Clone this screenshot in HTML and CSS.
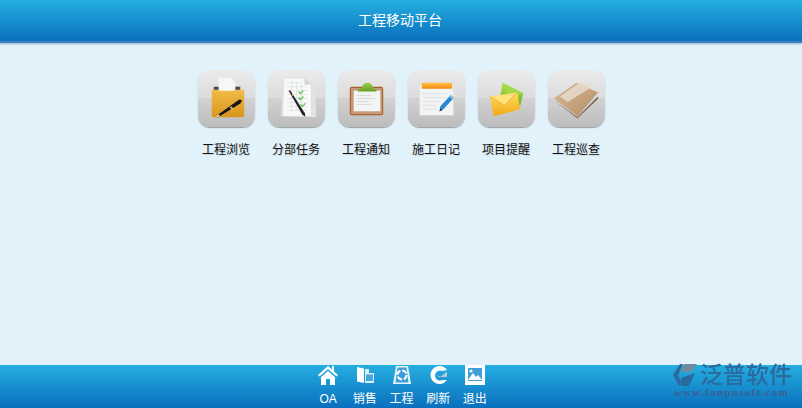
FILE: index.html
```html
<!DOCTYPE html>
<html lang="zh">
<head>
<meta charset="utf-8">
<title>工程移动平台</title>
<link rel="stylesheet" href="styles.css">
</head>
<body>
<div class="page">
  <header class="topbar">工程移动平台</header>
  <main class="content">
    <div class="grid">
      <a class="app">
        <span class="tile">
          <svg viewBox="0 0 58 58" class="tile-icon">
            <defs>
              <linearGradient id="folder" x1="0" y1="0" x2="0" y2="1"><stop offset="0" stop-color="#f3bb48"/><stop offset="1" stop-color="#d9951c"/></linearGradient>
              <linearGradient id="bar" x1="0" y1="0" x2="0" y2="1"><stop offset="0" stop-color="#ffc24a"/><stop offset="1" stop-color="#f58a12"/></linearGradient>
              <linearGradient id="mailback" x1="0" y1="0" x2="0" y2="1"><stop offset="0" stop-color="#b4e24e"/><stop offset="1" stop-color="#6fae22"/></linearGradient>
              <linearGradient id="mail" x1="0" y1="0" x2="0" y2="1"><stop offset="0" stop-color="#ffdf62"/><stop offset="1" stop-color="#f2a818"/></linearGradient>
              <linearGradient id="book" x1="0" y1="0" x2="1" y2="1"><stop offset="0" stop-color="#d8bb98"/><stop offset="1" stop-color="#b58d63"/></linearGradient>
              <linearGradient id="clip" x1="0" y1="0" x2="0" y2="1"><stop offset="0" stop-color="#9ccc52"/><stop offset="1" stop-color="#659e24"/></linearGradient>
            </defs>
            <path d="M16 17h27v10H16z" fill="#4c4c4c"/>
            <path d="M21 8h12l5 5v15H21z" fill="#f7f7f7"/>
            <path d="M14 20h6l2 1h14l2-1h9v26q0 2-2 2H16q-2 0-2-2z" fill="url(#folder)"/>
            <path d="M18 49l3-4 21-15 3 1-2 3-21 13z" fill="#15151a"/>
            <path d="M32 38l3 2.500 1.500-1-3-2.500z" fill="#d8c070"/>
            <path d="M18 49l2.500-4 2 1.500z" fill="#f4e8a0"/>
          </svg>
        </span>
        <span class="label">工程浏览</span>
      </a>
      <a class="app">
        <span class="tile">
          <svg viewBox="0 0 58 58" class="tile-icon">
            <path d="M16 12l32 4 1 32-36-1z" fill="#e2e4e2"/>
            <path d="M16 8h21l7 7v32H15z" fill="#f8f9f8" stroke="#cfd1cf" stroke-width=".5"/>
            <path d="M37 8v7h7z" fill="#d4d6d4"/>
            <path d="M19 13h15M19 17h21M19 21h21M19 25h21M19 29h21M19 33h21M19 37h21M19 41h21M24 12v30M29 12v30M34 14v28" stroke="#d4dfd4" stroke-width=".6" fill="none"/>
            <path d="M31 22l2 2 3-3M31 28l2 2 3-3M33 35l2 2 3-3" stroke="#5bc050" stroke-width="1.300" fill="none"/>
            <path d="M21 21l1.500-.5 15 23.500.5 3.500-3-2z" fill="#22222a"/>
            <path d="M24 25l1.600-.8 .8 1.500-1.600.8z" fill="#d9b850"/>
          </svg>
        </span>
        <span class="label">分部任务</span>
      </a>
      <a class="app">
        <span class="tile">
          <svg viewBox="0 0 58 58" class="tile-icon">
            <rect x="12" y="17" width="34" height="29" rx="2" fill="#a9622f"/>
            <rect x="13.200" y="18.200" width="31.600" height="26.600" rx="1" fill="#c99a78"/>
            <rect x="16" y="21" width="27" height="21" fill="#f3f5f5"/>
            <path d="M19 26h15M19 29h18M19 32h12M19 35h15" stroke="#d4d8d8" stroke-width="1" fill="none"/>
            <path d="M20 22q0-3 4-3 1-6 6-6t6 6q4 0 3 3z" fill="url(#clip)"/>
          </svg>
        </span>
        <span class="label">工程通知</span>
      </a>
      <a class="app">
        <span class="tile">
          <svg viewBox="0 0 58 58" class="tile-icon">
            <rect x="12" y="15" width="34" height="31" fill="#f1f3f4" stroke="#dcdedf" stroke-width=".5"/>
            <rect x="14" y="13" width="31" height="6" rx="1" fill="url(#bar)"/>
            <path d="M15 24h24M15 28h24M15 32h18M15 36h14M15 40h14" stroke="#dfe2e3" stroke-width="1" fill="none"/>
            <path d="M32 42l1-5 10-11 3 3-10 11z" fill="#2e86cf"/>
            <path d="M42 27l3 3 1.500-2-3-3z" fill="#7cc0ee"/>
            <path d="M32 42l1-3 2 2z" fill="#1e3a55"/>
          </svg>
        </span>
        <span class="label">施工日记</span>
      </a>
      <a class="app">
        <span class="tile">
          <svg viewBox="0 0 58 58" class="tile-icon">
            <path d="M25 13l21 11-3 12-21-5z" fill="url(#mailback)"/>
            <path d="M25 13l21 11-15 5z" fill="#a3d944"/>
            <path d="M12 27l28-4 3 17-27 7z" fill="url(#mail)"/>
            <path d="M12 27l28-4-13 13z" fill="#ffe27a"/>
            <path d="M12 27l15 9 13-13" fill="none" stroke="#d89516" stroke-width=".6"/>
          </svg>
        </span>
        <span class="label">项目提醒</span>
      </a>
      <a class="app">
        <span class="tile">
          <svg viewBox="0 0 58 58" class="tile-icon">
            <path d="M6 31l24 17 21-21v2L30 49z" fill="#6e5038"/>
            <path d="M6 29L29 13l22 10-21 24z" fill="url(#book)"/>
            <path d="M12 27L32 13l14 .5-5 6-21 13z" fill="#e6dace" opacity=".85"/>
          </svg>
        </span>
        <span class="label">工程巡查</span>
      </a>
    </div>
  </main>
  <footer class="bottombar">
    <nav class="nav">
      <a class="nav-item">
        <svg viewBox="0 0 20 20" class="nav-icon"><path d="M10 1L0 10l1.500 1.500L10 4l8.500 7.500L20 10l-4-3.500V1h-2v3.500zM3 12v8h5v-6h4v6h5v-8l-7-6z" fill="#fff"/></svg>
        <span class="nav-label">OA</span>
      </a>
      <a class="nav-item">
        <svg viewBox="0 0 20 20" class="nav-icon"><path d="M2 2l7 1.500V18l-7-1.500z" fill="#fff"/><path d="M10 4h4v4h5v10h-9z" fill="#d8eef9"/><rect x="11" y="9.500" width="7" height="6.500" fill="#4aa6da"/></svg>
        <span class="nav-label">销售</span>
      </a>
      <a class="nav-item">
        <svg viewBox="0 0 20 20" class="nav-icon"><path d="M4 1h12l3 18H1z" fill="#e8f4fb"/><path d="M5.500 2.500h9l2 15h-13z" fill="#3b9ed8"/><circle cx="10" cy="10" r="4.500" fill="none" stroke="#fff" stroke-width="2" stroke-dasharray="5 2"/></svg>
        <span class="nav-label">工程</span>
      </a>
      <a class="nav-item">
        <svg viewBox="0 0 20 20" class="nav-icon"><path d="M19 5a9 9 0 1 0 0 10h-4.500A5 5 0 1 1 14 6z" fill="#fff"/><path d="M9 10l2.500 2.500L19 6.500V12h-6" fill="#b9c9d4"/></svg>
        <span class="nav-label">刷新</span>
      </a>
      <a class="nav-item">
        <svg viewBox="0 0 20 20" class="nav-icon"><rect width="20" height="20" fill="#fff"/><rect x="3" y="3" width="14" height="13" fill="#3f9fd6"/><path d="M3 15l5-7 3 4 2-2 4 5z" fill="#fff"/><circle cx="6" cy="6" r="1.500" fill="#fff"/></svg>
        <span class="nav-label">退出</span>
      </a>
    </nav>
    <div class="brand">
      <svg viewBox="0 0 24 22" class="brand-mark"><path d="M0 11L7 0h3L5 11l4 9-3 2z" fill="#2b6a9e"/><path d="M8 8l3-8h13l-6 8z" fill="#6f8a9e"/><path d="M8 14l14-5-6 13H9z" fill="#2b6a9e"/></svg>
      <div class="brand-text">
        <div class="brand-name">泛普软件</div>
      </div>
      <div class="brand-url">www.fanpusoft.com</div>
    </div>
  </footer>
</div>
</body>
</html>
```
FILE: styles.css
```css
* { box-sizing: border-box; }
html, body { margin: 0; height: 100%; }
body {
  font-family: "Liberation Sans", "Noto Sans CJK SC", sans-serif;
  background: #e2f2fa;
  overflow: hidden;
}
.page {
  display: flex;
  flex-direction: column;
  width: 802px;
  height: 408px;
}
.topbar {
  height: 43px;
  line-height: 41px;
  padding-right: 2px;
  text-align: center;
  color: #fff;
  font-size: 14px;
  background: linear-gradient(#25afe0, #0a70bf 94%, #3a86c4 96%);
  box-shadow: 0 1px 2px rgba(60, 90, 120, .45);
}
.content {
  flex: 1;
  padding-top: 27px;
  display: flex;
  justify-content: center;
  align-items: flex-start;
}
.grid { display: flex; }
.app {
  width: 70px;
  display: flex;
  flex-direction: column;
  align-items: center;
}
.tile {
  width: 57px;
  height: 57px;
  border-radius: 12px;
  background: linear-gradient(#ebebeb, #dbdbdb 50%, #d2d2d2 50%, #bcbcbc);
  box-shadow: 0 1px 1px rgba(90, 90, 90, .55);
}
.tile-icon { display: block; width: 57px; height: 57px; }
.label {
  margin-top: 15px;
  font-size: 12px;
  line-height: 17px;
  color: #111;
  white-space: nowrap;
  text-shadow: 1px 1px 1px rgba(0, 0, 0, .12);
}
.bottombar {
  position: relative;
  height: 43px;
  background: linear-gradient(#25afe0, #0a6fbe);
}
.nav {
  display: flex;
  justify-content: center;
  height: 100%;
  padding-left: 1px;
}
.nav-item {
  width: 36.7px;
  display: flex;
  flex-direction: column;
  align-items: center;
}
.nav-icon { display: block; width: 20px; height: 20px; flex: none; }
.nav-label {
  margin-top: 6px;
  font-size: 12px;
  line-height: 17px;
  color: #fff;
  white-space: nowrap;
}
.brand {
  position: absolute;
  left: 673px;
  top: -1px;
  width: 122px;
  height: 34px;
  color: #2b6a9e;
}
.brand-mark {
  position: absolute;
  left: 0;
  top: 0;
  width: 24px;
  height: 22px;
}
.brand-text { position: absolute; left: 27px; top: 0; }
.brand-name {
  font-size: 23px;
  line-height: 22px;
  font-weight: 500;
  white-space: nowrap;
}
.brand-url {
  position: absolute;
  left: 1px;
  top: 23px;
  font-family: "Liberation Serif", serif;
  font-size: 11px;
  line-height: 11px;
  font-weight: 700;
  letter-spacing: 1.3px;
  color: #3d5f8e;
  white-space: nowrap;
}
```
